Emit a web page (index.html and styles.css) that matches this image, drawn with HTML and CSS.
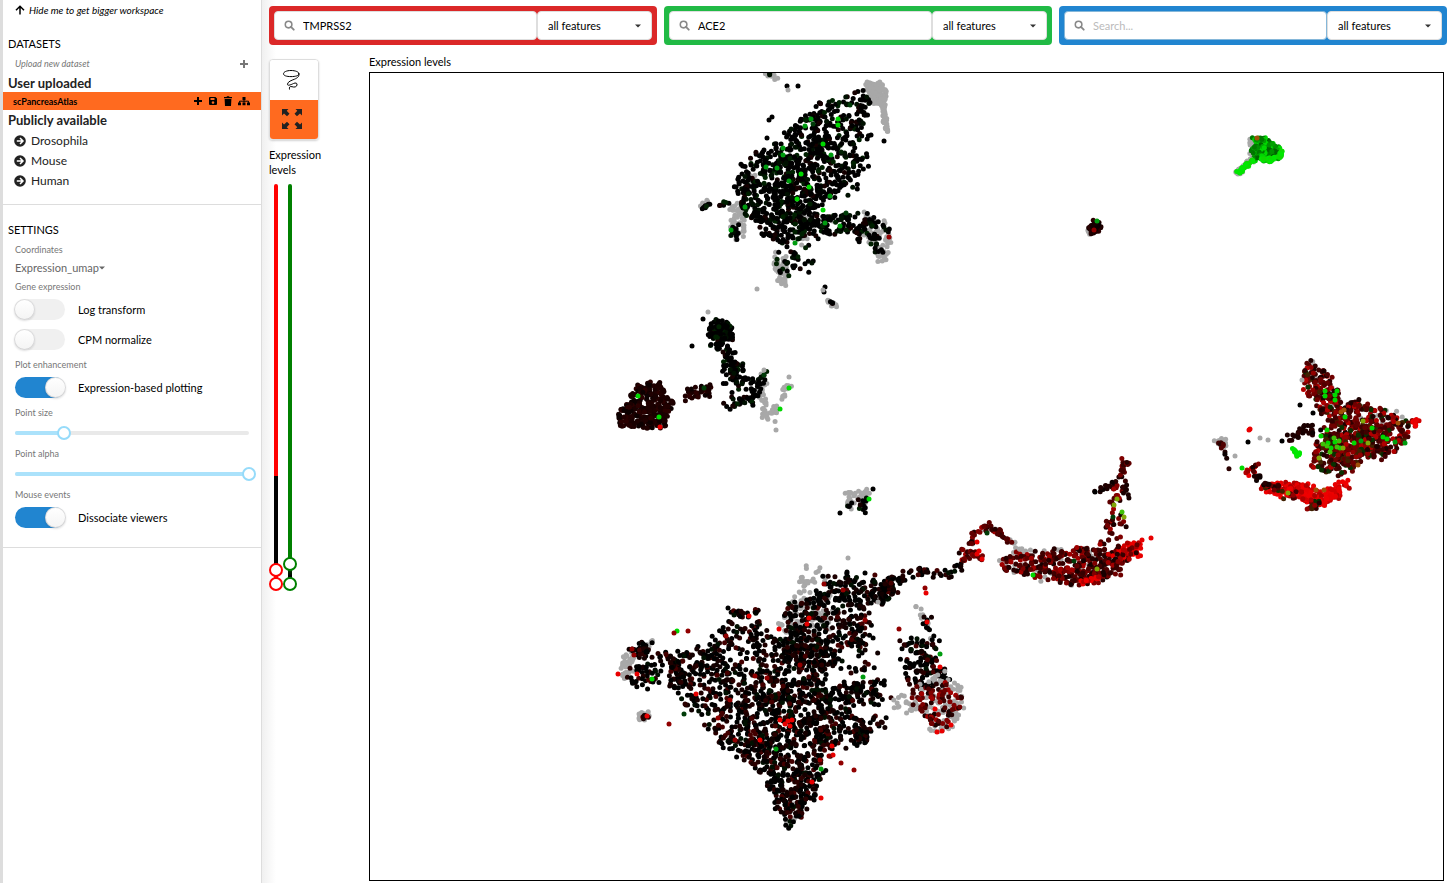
FILE: index.html
```html
<!DOCTYPE html>
<html lang="en">
<head>
<meta charset="utf-8">
<title>Expression levels</title>
<link rel="stylesheet" href="styles.css">
</head>
<body>
<svg class="defs" aria-hidden="true">
  <symbol id="i-plus" viewBox="0 0 10 10"><path d="M4 1h2v3h3v2H6v3H4V6H1V4h3z"/></symbol>
  <symbol id="i-search" viewBox="0 0 12 12"><circle cx="5" cy="5" r="3.6" fill="none" stroke="currentColor" stroke-width="1.7"/><path d="M7.6 7.6l3 3" stroke="currentColor" stroke-width="2" stroke-linecap="round"/></symbol>
  <symbol id="i-go" viewBox="0 0 12 12"><circle cx="6" cy="6" r="5.8"/><path d="M2.8 6h5.8M6 3l3 3-3 3" fill="none" stroke="#fff" stroke-width="1.5"/></symbol>
  <symbol id="i-caret" viewBox="0 0 6 4"><path d="M0 .5h6L3 3.5z"/></symbol>
</svg>
<div class="app">
  <aside class="sidebar">
    <button class="hide-btn"><svg class="icon" viewBox="0 0 10 10"><path d="M5 9.6V1.4M1 5.2L5 1.2l4 4" fill="none" stroke="currentColor" stroke-width="1.5"/></svg>Hide me to get bigger workspace</button>
    <section class="datasets">
      <h2 class="section-title">DATASETS</h2>
      <button class="upload"><span>Upload new dataset</span><svg class="icon"><use href="#i-plus"/></svg></button>
      <h3 class="group-title">User uploaded</h3>
      <div class="active-set">
        <span class="set-name">scPancreasAtlas</span>
        <button class="set-btn" aria-label="Add"><svg class="icon"><use href="#i-plus"/></svg></button>
        <button class="set-btn" aria-label="Save"><svg class="icon" viewBox="0 0 10 10"><path fill-rule="evenodd" d="M1 2a1 1 0 0 1 1-1h5.500L9 2.500V8a1 1 0 0 1-1 1H2a1 1 0 0 1-1-1zM2.500 2v2h4V2zM5 5.200a1.300 1.300 0 1 0 .01 0z"/></svg></button>
        <button class="set-btn" aria-label="Delete"><svg class="icon" viewBox="0 0 10 10"><path d="M1 1h2.500l.5-.8h2l.5.800H9v1.300H1zM1.600 3h6.800L8 10H2z"/></svg></button>
        <button class="set-btn" aria-label="Hierarchy"><svg class="icon icon-wide" viewBox="0 0 12 10"><path d="M4.500 1h3v3h-3zM0 6.500h3v2.800H0zM4.500 6.500h3v2.800h-3zM9 6.500h3v2.800H9z"/><path d="M6 3.500v3M1.500 6.800V5.200h9v1.600" fill="none" stroke="currentColor"/></svg></button>
      </div>
      <h3 class="group-title group-public">Publicly available</h3>
      <ul class="species">
        <li><a href="#drosophila"><svg class="icon icon-go"><use href="#i-go"/></svg>Drosophila</a></li>
        <li><a href="#mouse"><svg class="icon icon-go"><use href="#i-go"/></svg>Mouse</a></li>
        <li><a href="#human"><svg class="icon icon-go"><use href="#i-go"/></svg>Human</a></li>
      </ul>
    </section>
    <section class="settings">
      <h2 class="section-title">SETTINGS</h2>
      <div class="groups">
        <div class="group">
          <label class="caption" for="coords">Coordinates</label>
          <div class="coords"><select id="coords"><option>Expression_umap</option></select><svg class="icon-caret"><use href="#i-caret"/></svg></div>
        </div>
        <div class="group">
          <p class="caption">Gene expression</p>
          <div class="toggles">
            <label class="toggle"><input type="checkbox">Log transform</label>
            <label class="toggle"><input type="checkbox">CPM normalize</label>
          </div>
        </div>
        <div class="group">
          <p class="caption">Plot enhancement</p>
          <label class="toggle"><input type="checkbox" checked>Expression-based plotting</label>
        </div>
        <div class="group">
          <label class="caption" for="psize">Point size</label>
          <div class="slider"><div class="rail"><div class="fill" style="width:21%"></div></div><input id="psize" type="range" value="21"></div>
        </div>
        <div class="group">
          <label class="caption" for="palpha">Point alpha</label>
          <div class="slider"><div class="rail"><div class="fill" style="width:100%"></div></div><input id="palpha" type="range" value="100"></div>
        </div>
        <div class="group">
          <p class="caption">Mouse events</p>
          <label class="toggle"><input type="checkbox" checked>Dissociate viewers</label>
        </div>
      </div>
    </section>
  </aside>
  <main class="main">
    <div class="searches">
      <form class="search red">
        <div class="field"><svg class="icon-search"><use href="#i-search"/></svg><input type="text" aria-label="First gene" value="TMPRSS2"></div>
        <div class="pick"><select aria-label="First feature type"><option>all features</option></select><svg class="icon-caret"><use href="#i-caret"/></svg></div>
      </form>
      <form class="search green">
        <div class="field"><svg class="icon-search"><use href="#i-search"/></svg><input type="text" aria-label="Second gene" value="ACE2"></div>
        <div class="pick"><select aria-label="Second feature type"><option>all features</option></select><svg class="icon-caret"><use href="#i-caret"/></svg></div>
      </form>
      <form class="search blue">
        <div class="field"><svg class="icon-search"><use href="#i-search"/></svg><input type="text" aria-label="Third gene" placeholder="Search..." autofocus></div>
        <div class="pick"><select aria-label="Third feature type"><option>all features</option></select><svg class="icon-caret"><use href="#i-caret"/></svg></div>
      </form>
    </div>
    <div class="workspace">
      <div class="tools">
        <div class="tool-buttons">
          <button class="tool" aria-label="Lasso"><svg class="icon-lasso" viewBox="0 0 20 22"><path d="M9 1.500C4.500 1.500 1.500 3 1.500 4.800S4.500 7.600 9 7.600s8-1 8-2.800-3.500-3.300-8-3.300M16.500 4c1.500 3-1 5-4 6.200S6 12.500 5.500 15s4 .5 6-.5 4-.5 3.500 1.500-2.500 2.500-5 1.700-2.800.8-2.500 2.800" fill="none" stroke="currentColor"/></svg></button>
          <button class="tool on" aria-label="Zoom and pan"><svg class="icon-expand" viewBox="0 0 20 20"><path d="M0 0h6.500L4.700 1.800 7.500 4.800 5 7.200 2 4.500 0 6.500zM20 0v6.500L18 4.500 15 7.200 12.500 4.800 15.300 1.800 13.500 0zM20 20h-6.500l1.800-1.800-2.800-3 2.500-2.400 3 2.700 2-2zM0 20v-6.500l2 2 3-2.700 2.500 2.400-2.800 3L6.500 20z"/></svg></button>
        </div>
        <p class="levels">Expression levels</p>
        <div class="v-sliders">
          <div class="v-slider v-red"><div class="v-rail"></div><input type="range" aria-label="TMPRSS2 minimum" step="any" value="0"><input type="range" aria-label="TMPRSS2 maximum" step="any" value="3.5"></div>
          <div class="v-slider v-green"><div class="v-rail"></div><input type="range" aria-label="ACE2 minimum" step="any" value="0"><input type="range" aria-label="ACE2 maximum" step="any" value="5"></div>
        </div>
      </div>
      <section class="viewer">
        <h1 class="viewer-title">Expression levels</h1>
        <div class="plot"><canvas id="plot" aria-label="UMAP of cells coloured by expression"></canvas></div>
      </section>
    </div>
  </main>
</div>
<script src="plot.js"></script>
</body>
</html>
```

FILE: styles.css
```css
* { box-sizing: border-box; }
body { margin: 0; font: 11px/15px Lato, "Liberation Sans", sans-serif; color: #000; background: #fff; }
h1, h2, h3, p, ul { margin: 0; padding: 0; font-weight: 400; }
button, input, select { font: inherit; color: inherit; margin: 0; }
button { border: 0; padding: 0; background: none; cursor: pointer; }
.defs { display: none; }
svg { display: block; fill: currentColor; flex: none; }
.icon { width: 10px; height: 10px; }

.app { display: flex; min-height: 100vh; }
.sidebar { flex: none; width: 262px; border-left: 3px solid #ddd; border-right: 1px solid #ddd; }
.hide-btn { display: flex; align-items: center; gap: 4px; padding-left: 12px; font-size: 10px; font-style: italic; line-height: 20px; }
.datasets { padding: 14px 0 13px; border-bottom: 1px solid #ddd; }
.section-title { padding-left: 5px; font-size: 11px; line-height: 20px; }
.upload { display: flex; justify-content: space-between; align-items: center; width: 100%; padding: 0 12px; font-size: 9px; font-style: italic; line-height: 20px; color: #777; }
.group-title { padding-left: 5px; font-size: 13px; font-weight: 700; line-height: 18px; color: #222; }
.group-public { line-height: 20px; margin-bottom: 1px; }
.active-set { display: flex; align-items: center; gap: 5px; height: 18px; padding: 0 11px 0 10px; background: #ff6a1f; font-size: 9px; font-weight: 700; }
.set-name { flex: 1; }
.icon-wide { width: 12px; }
.species { list-style: none; padding-left: 11px; font-size: 12px; line-height: 20px; }
.species a { display: flex; align-items: center; gap: 5px; color: #222; text-decoration: none; }
.icon-go { width: 12px; height: 12px; }

.settings { padding: 15px 12px 16px 0; border-bottom: 1px solid #ddd; }
.groups { display: grid; gap: 2px; padding-left: 12px; }
.caption { display: block; font-size: 9px; line-height: 20px; color: #777; }
.coords { display: flex; align-items: center; color: #666; }
.coords select { appearance: none; border: 0; padding: 0; background: none; height: 15px; }
.icon-caret { width: 6px; height: 4px; pointer-events: none; }
.toggles { display: grid; gap: 4px; }
.toggle { display: flex; align-items: center; gap: 13px; height: 25px; margin-bottom: 1px; }
.toggle input { appearance: none; width: 50px; height: 21px; border-radius: 11px; background: #f0f0f0; }
.toggle input::before { content: ""; display: block; width: 21px; height: 21px; margin-left: -1px; border-radius: 50%; background: linear-gradient(#fff, #f4f4f4); box-shadow: 0 1px 2px rgba(34,36,38,.15), inset 0 0 0 1px rgba(34,36,38,.15); }
.toggle input:checked { background: #2185d0; }
.toggle input:checked::before { margin-left: 30px; }

.slider { display: grid; align-items: center; height: 19px; }
.slider > * { grid-area: 1 / 1; }
.rail { height: 4px; border-radius: 2px; background: #e9e9e9; }
.fill { height: 4px; border-radius: 2px; background: #abe2fb; }
.slider input { appearance: none; height: 14px; margin: 0 -7px; background: none; }
input[type="range"]::-webkit-slider-thumb { appearance: none; width: 14px; height: 14px; border: 2px solid #96dbfa; border-radius: 50%; background: #fff; pointer-events: auto; }

.main { flex: 1; min-width: 0; display: flex; flex-direction: column; padding: 6px 2px 2px 7px; background: linear-gradient(90deg, #f0f0f0, #fff 14px); }
.searches { display: grid; grid-template-columns: repeat(3, 1fr); gap: 7px; }
.search { display: flex; padding: 5px; border-radius: 4px; min-width: 0; }
.red { background: #db2828; }
.green { background: #21ba45; }
.blue { background: #2185d0; }
.field, .pick { display: flex; align-items: center; height: 29px; border: 1px solid #dedede; border-radius: 4px; background: #fff; }
.field { flex: 1; min-width: 0; padding-left: 9px; gap: 8px; }
.blue .field { border-color: #85b7d9; }
.field input { flex: 1; min-width: 0; border: 0; padding: 0; outline: 0; background: none; }
.field input::placeholder { color: #bbb; }
.icon-search { width: 11px; height: 11px; color: #888; }
.pick { position: relative; width: 115px; }
.pick select { appearance: none; width: 100%; height: 27px; border: 0; padding: 0 10px; background: none; }
.pick .icon-caret { position: absolute; right: 10px; color: #333; }

.workspace { flex: 1; display: flex; gap: 50px; padding: 9px 3px 0 0; }
.tools { flex: none; width: 50px; padding-top: 5px; }
.tool-buttons { border: 1px solid #ddd; border-radius: 4px; overflow: hidden; box-shadow: 0 1px 2px rgba(34,36,38,.2); }
.tool { display: grid; place-items: center; width: 100%; height: 40px; padding-right: 4px; background: #fff; }
.tool.on { height: 39px; padding-bottom: 2px; background: #ff6a1f; color: #222; }
.icon-lasso { width: 20px; height: 22px; }
.icon-expand { width: 20px; height: 20px; }
.levels { margin: 7px 0 0; }
.v-sliders { display: flex; }
.v-slider { display: grid; justify-items: center; width: 14px; height: 414px; }
.v-slider > * { grid-area: 1 / 1; }
.v-rail { width: 4px; margin: 7px 0; border-radius: 2px; }
.v-red .v-rail { background: linear-gradient(red 73%, #000 73% 96%, red 96%); }
.v-green .v-rail { background: linear-gradient(green 95%, #000 98%, green); }
.v-slider input { appearance: none; writing-mode: vertical-lr; direction: rtl; width: 14px; height: 414px; background: none; pointer-events: none; }
.v-red input::-webkit-slider-thumb { border-color: red; }
.v-green input::-webkit-slider-thumb { border-color: green; }
.viewer { flex: 1; min-width: 0; display: flex; flex-direction: column; }
.viewer-title { font-size: 11px; line-height: 15px; padding-bottom: 3px; }
.plot { flex: 1; display: grid; min-height: 400px; border: 1px solid #000; background: #fff; }
#plot { width: 100%; height: 100%; min-width: 0; min-height: 0; contain: size; }
```

FILE: plot.js
```js
// Seeded generator so that the embedding is drawn the same way each time.
let seed = 20200;
function rnd() {
  seed = (seed + 0x6D2B79F5) | 0;
  let t = Math.imul(seed ^ (seed >>> 15), 1 | seed);
  t = (t + Math.imul(t ^ (t >>> 7), 61 | t)) ^ t;
  return ((t ^ (t >>> 14)) >>> 0) / 4294967296;
}
const palettes = {
  g: ['#a8a8a8'],
  k: ['#000', '#000', '#000', '#000', '#000', '#000', '#001000', '#000', '#002000', '#150000'],
  d: ['#1b0000', '#200000', '#180000', '#0c0000', '#2a0000'],
  m: ['#000', '#000', '#000', '#100000', '#140000', '#1e0000', '#000', '#2a0000', '#000', '#440000', '#000', '#001000'],
  r: ['#500000', '#350000', '#600000', '#250000', '#800000', '#400000', '#700000', '#180000', '#a00000'],
  x: ['#500000', '#700000', '#300000', '#900000', '#400000', '#600000', '#b00000', '#1e0000', '#402000', '#083000', '#700000'],
  b: ['#e80000', '#e80000', '#d00000', '#f00000', '#b00000'],
  v: ['#007800', '#009000', '#006400', '#00a000', '#00d800', '#00a800'],
  e: ['#00e800', '#10d800']
};
// How far cells of a palette stray over the outline of their region.
const stray = { g: 3, k: 5, d: 1, m: 5, r: 3, x: 4, b: 2, v: 1, e: 1 };
// Filled regions: palette, number of cells, outline.
const areas = [
  ['g', 130, [866,83,882,84,886,95,884,105,872,102]],
  ['g', 60, [731,205,745,205,748,222,742,238,731,240]],
  ['g', 45, [772,252,786,255,788,272,784,286,779,286]],
  ['g', 65, [864,208,882,214,892,236,886,262,878,264,876,248,862,240]],
  ['g', 25, [748,174,756,176,750,188,745,182]],
  ['g', 25, [760,210,840,215,800,250]],
  ['k', 820, [853,92,864,90,872,96,864,108,867,118,862,130,858,140,855,150,858,165,856,178,840,190,828,198,818,202,820,220,814,232,800,240,788,246,768,238,758,226,744,212,735,196,734,184,741,168,757,152,785,136,800,120,823,102,843,96]],
  ['k', 85, [770,160,812,150,815,225,780,235]],
  ['k', 32, [860,95,872,100,866,130,868,170,858,190,846,200,856,150]],
  ['k', 75, [812,215,848,212,858,220,860,232,840,232,812,236]],
  ['k', 55, [856,214,870,213,884,222,889,234,878,238,884,252,877,256,870,244,852,242]],
  ['k', 14, [732,228,737,226,737,240,732,240]],
  ['k', 18, [765,246,800,248,800,270,780,282]],
  ['k', 14, [782,255,815,240,815,275,790,285]],
  ['d', 300, [630,384,662,382,664,394,674,402,672,410,665,428,618,429,618,411,630,400]],
  ['k', 115, [709,325,720,320,730,326,731,338,724,343,712,337]],
  ['g', 28, [764,403,780,403,780,412,775,422,761,416]],
  ['g', 22, [757,376,766,374,766,402,758,396]],
  ['g', 45, [846,491,852,494,870,491,866,504,848,508]],
  ['k', 15, [848,498,874,492,866,516,847,512]],
  ['g', 75, [802,566,822,568,832,590,834,618,800,624,782,618,796,590]],
  ['g', 70, [775,625,830,610,832,652,780,650]],
  ['g', 20, [780,790,818,790,800,818,785,824]],
  ['g', 55, [622,682,620,662,634,646,652,638,651,648,636,655,627,680]],
  ['m', 880, [665,655,695,646,715,630,726,618,738,624,756,620,776,640,828,640,828,672,823,698,836,720,830,745,826,762,812,782,790,795,768,782,748,762,728,753,714,738,704,716,682,706,678,690]],
  ['m', 330, [740,680,826,682,832,705,832,745,820,788,780,796,745,758]],
  ['m', 95, [785,648,825,640,838,655,830,670,780,660]],
  ['m', 330, [784,604,800,600,815,592,822,574,850,574,866,582,866,604,868,628,876,640,865,652,842,645,782,650,780,638]],
  ['m', 75, [870,577,894,577,896,590,886,604,872,604]],
  ['m', 100, [770,788,818,786,798,824,786,826,778,812]],
  ['m', 85, [828,685,880,682,895,698,868,706,832,706]],
  ['m', 45, [852,718,872,730,866,743,856,740]],
  ['m', 50, [832,706,862,716,860,745,832,750]],
  ['m', 25, [835,650,870,640,890,700,850,690]],
  ['m', 12, [865,715,895,720,890,725,870,735]],
  ['m', 130, [899,645,908,636,930,640,938,658,948,680,940,692,907,684]],
  ['g', 120, [890,698,925,682,944,672,955,676,964,695,962,718,948,732,932,734,918,712,894,712]],
  ['r', 85, [905,690,948,680,961,694,961,716,944,731,920,716]],
  ['m', 36, [632,650,648,642,648,655,638,658]],
  ['m', 42, [634,664,655,660,662,676,645,692,628,678]],
  ['m', 45, [655,650,678,656,688,690,672,690]],
  ['m', 22, [732,612,745,611,760,609,760,613,730,616]],
  ['g', 18, [638,712,650,712,650,719,640,720]],
  ['r', 7, [639,715,650,715,648,719]],
  ['g', 55, [995,562,1012,548,1065,548,1110,550,1110,580,1075,588,1020,578]],
  ['r', 350, [998,562,1012,554,1030,554,1060,550,1085,547,1108,550,1118,544,1135,550,1122,568,1100,582,1075,586,1050,580,1020,573,1002,570]],
  ['g', 35, [1303,368,1313,356,1345,398,1412,415,1420,422,1418,430,1400,430,1330,430]],
  ['x', 150, [1304,370,1313,360,1319,366,1333,380,1343,394,1341,422,1326,416,1312,400,1304,390]],
  ['x', 480, [1346,407,1358,399,1374,406,1392,412,1402,420,1416,422,1402,444,1383,458,1362,461,1343,478,1325,472,1311,464,1318,442,1327,427,1334,414]],
  ['x', 110, [1320,440,1390,425,1385,450,1335,470]],
  ['b', 12, [1414,415,1420,422,1417,428,1412,424]],
  ['b', 24, [1285,484,1298,482,1300,495,1284,493]],
  ['g', 20, [1251,137,1260,140,1256,161,1252,161,1250,150]],
  ['v', 150, [1252,138,1264,137,1280,146,1282,156,1269,163,1254,160,1250,150]],
  ['g', 6, [1087,230,1092,226,1092,235]],
  ['d', 40, [1093,220,1101,223,1102,229,1093,235,1088,230]],
  ['e', 16, [1291,448,1300,452,1298,457]]
];
// Trails: palette, number of cells, spread, polyline.
const trails = [
  ['g', 10, 3, [767,75,775,78]], ['k', 2, 1, [768,73,770,74]], ['g', 50, 2, [881,98,884,115,887,131]],
  ['g', 12, 2, [700,207,708,201]], ['k', 9, 1, [703,208,711,203]], ['k', 7, 2, [718,204,728,203]],
  ['g', 13, 2, [828,302,837,307]], ['k', 3, 1, [830,301,833,304]],
  ['k', 88, 8, [717,338,728,360,736,374,734,388]], ['k', 25, 4, [722,407,740,401,758,396]],
  ['k', 16, 7, [745,388,768,378]], ['d', 32, 6, [684,394,700,393,712,388]], ['g', 14, 3, [783,396,789,384]],
  ['k', 13, 4, [752,405,758,387,766,376]], ['m', 52, 4, [885,588,900,580,920,570,945,576,962,566]],
  ['g', 12, 2, [914,603,926,620,932,642]], ['m', 12, 4, [926,620,936,645]],
  ['r', 26, 5, [962,556,970,552,980,556]], ['g', 18, 3, [972,545,975,532,990,526,1005,536,1018,548]],
  ['r', 38, 3, [970,545,974,532,987,525,1000,533,1012,544]], ['r', 42, 5, [1104,545,1111,522,1117,500,1117,486,1124,464]],
  ['r', 12, 2, [1122,470,1128,462]], ['r', 9, 7, [1115,510,1124,536]],
  ['d', 11, 2, [1097,492,1114,482]], ['d', 9, 3, [1123,486,1128,500]], ['b', 42, 7, [1118,554,1130,550,1140,544]],
  ['r', 20, 8, [1110,570,1140,545]],
  ['b', 16, 3, [1080,584,1100,576]], ['b', 200, 6, [1268,486,1285,490,1304,491,1317,500,1334,495,1347,482]],
  ['x', 36, 5, [1264,484,1280,492,1310,503,1320,510]], ['g', 18, 4, [1217,441,1224,445]], ['r', 6, 3, [1219,443,1222,446]],
  ['d', 4, 1, [1225,452,1229,470]], ['b', 7, 3, [1248,472,1253,468]], ['r', 9, 3, [1250,472,1256,464]],
  ['d', 12, 3, [1257,476,1270,486]], ['d', 26, 5, [1280,440,1298,435,1307,427,1318,432]],
  ['g', 22, 2, [1235,175,1242,168,1251,157]], ['e', 32, 2, [1236,174,1245,168,1253,160]],
  ['e', 22, 2, [1261,160,1271,159,1281,156,1282,150]]
];
// Single marked cells by colour.
const marks = {
  '#00d800': [838,119,838,125,823,144,801,174,809,187,797,199,823,210,638,396,659,417,789,388,780,409,869,499,677,631,652,679,1033,575,1325,391,1335,395,1337,391,1325,396,1335,400,1345,417,1242,468,1327,430,1321,436,1383,437,1387,439,1372,428,1328,443,1335,442,1331,448,1340,448,1354,443],
  '#009c10': [783,148,777,168,783,155,766,167,745,207,731,230,789,181,805,126,811,119,831,155,830,196,840,226,825,223,795,243,863,677,940,654,776,749,821,769,1361,441,1395,442,1405,443,1097,221],
  '#003c08': [813,124,850,105,846,213,704,388,764,375,684,714,987,533,1074,561,1113,517],
  '#40c008': [1327,446,1334,438,1337,447,1323,444,1330,452,1339,441,1122,512],
  '#80a808': [1114,505,1124,517,1117,499,1097,569,1363,421,1368,443,1319,458,1288,493,1343,448],
  '#a05008': [1341,412,1344,410,1398,423,1316,490,1324,490,1358,465,1257,138],
  '#e80000': [660,427,749,616,809,618,807,624,779,629,780,720,788,721,785,724,790,726,792,720,832,746,833,755,760,740,812,782,927,622,926,593,940,667,935,709,951,725,942,731,937,732,1250,429,1249,430,977,542,979,551,982,559,977,554,618,674,637,674,696,694,821,798,1142,540,1151,538,647,716],
  '#900000': [669,724,841,763,854,770,829,756,925,588,824,584,843,590,899,629,865,620,718,718,767,678,735,740,800,665,820,760,889,237,726,636,688,631,674,633,1094,230,632,649,634,655,730,700,755,676],
  '#000': [692,346,703,319,787,86,798,86,769,120,772,117,767,138,873,489,840,513,825,287,824,292,1248,442,847,572,865,573,728,608,884,141,871,135,1095,492,1300,405,1313,413,1282,441],
  '#a8a8a8': [788,90,708,312,757,289,848,558,878,602,1260,438,1268,440,1235,456,1302,380,789,377,764,370,776,430,823,290]
};

const dots = [];
const put = (x, y, c) => dots.push([x - 370, y - 73, c]);
const tint = p => palettes[p][Math.floor(rnd() * palettes[p].length)];
const jitter = w => (rnd() + rnd() - 1) * w;

function inside(x, y, p) {
  let hit = false;
  for (let i = 0, j = p.length - 2; i < p.length; j = i, i += 2) {
    if ((p[i + 1] > y) !== (p[j + 1] > y) &&
        x < (p[j] - p[i]) * (y - p[i + 1]) / (p[j + 1] - p[i + 1]) + p[i]) hit = !hit;
  }
  return hit;
}
for (const [pal, n, p] of areas) {
  const xs = p.filter((_, i) => i % 2 === 0), ys = p.filter((_, i) => i % 2);
  const x0 = Math.min(...xs), x1 = Math.max(...xs), y0 = Math.min(...ys), y1 = Math.max(...ys);
  for (let k = 0; k < n;) {
    const x = x0 + rnd() * (x1 - x0), y = y0 + rnd() * (y1 - y0);
    if (inside(x, y, p)) { put(x + jitter(stray[pal]), y + jitter(stray[pal]), tint(pal)); k++; }
  }
}
for (const [pal, n, w, p] of trails) {
  const parts = p.length / 2 - 1;
  for (let k = 0; k < n; k++) {
    const t = rnd() * parts, i = Math.floor(t) * 2, f = t % 1;
    put(p[i] + (p[i + 2] - p[i]) * f + jitter(w * 1.5),
        p[i + 1] + (p[i + 3] - p[i + 1]) * f + jitter(w * 1.5), tint(pal));
  }
}
for (const c in marks) {
  for (let i = 0; i < marks[c].length; i += 2) put(marks[c][i], marks[c][i + 1], c);
}

const canvas = document.getElementById('plot');
function draw() {
  const w = canvas.clientWidth, h = canvas.clientHeight;
  canvas.width = w;
  canvas.height = h;
  const ctx = canvas.getContext('2d');
  for (const [x, y, c] of dots) {
    ctx.fillStyle = c;
    ctx.beginPath();
    ctx.arc(x * w / 1073, y * h / 807, 2.5, 0, Math.PI * 2);
    ctx.fill();
  }
}
draw();
window.addEventListener('resize', draw);
```
